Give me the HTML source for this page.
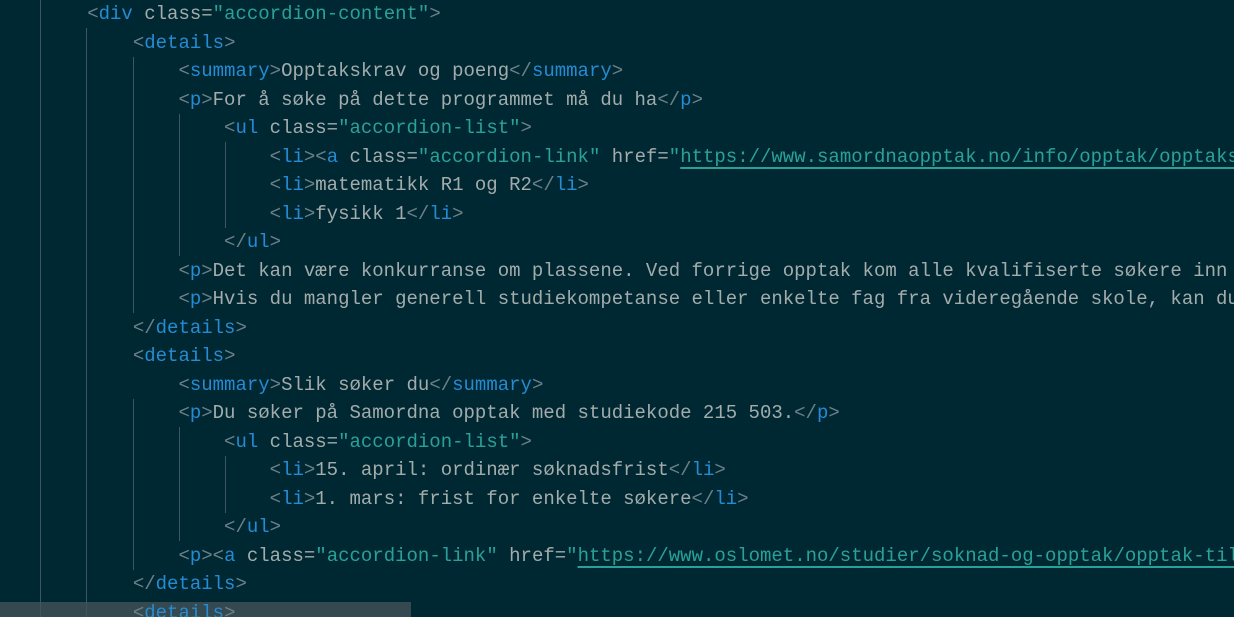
<!DOCTYPE html>
<html><head><meta charset="utf-8"><style>
html,body{margin:0;padding:0;width:1234px;height:617px;overflow:hidden;}
body{background:#002833;position:relative;}
.code{position:absolute;left:-4px;top:0;width:1240px;height:617px;overflow:hidden;font-family:"Liberation Mono",monospace;font-size:19px;color:#a3acab;}
.l{height:28.5px;line-height:28.5px;white-space:pre;}
.t{color:#268bd2}
.b{color:#6c8088}
.s{color:#2aa198}
.u{color:#2aa198;text-decoration:underline;text-decoration-color:#2aa198;text-underline-offset:5px;text-decoration-thickness:2px}
.g{position:absolute;width:1px;background:#3d5660;}
.hl{position:absolute;left:0;top:602px;width:411px;height:15px;background:#344a50;}
</style></head><body>
<div class="hl"></div>
<div class="g" style="left:40px;top:0;height:617px"></div>
<div class="g" style="left:86px;top:28px;height:589px"></div>
<div class="g" style="left:133px;top:57px;height:256px"></div>
<div class="g" style="left:179px;top:114px;height:142px"></div>
<div class="g" style="left:225px;top:142px;height:86px"></div>
<div class="g" style="left:133px;top:399px;height:171px"></div>
<div class="g" style="left:179px;top:427px;height:114px"></div>
<div class="g" style="left:225px;top:456px;height:57px"></div>
<div class="code">
<div class="l">        <span class="b">&lt;</span><span class="t">div</span> class=<span class="s">"accordion-content"</span><span class="b">&gt;</span></div>
<div class="l">            <span class="b">&lt;</span><span class="t">details</span><span class="b">&gt;</span></div>
<div class="l">                <span class="b">&lt;</span><span class="t">summary</span><span class="b">&gt;</span>Opptakskrav og poeng<span class="b">&lt;/</span><span class="t">summary</span><span class="b">&gt;</span></div>
<div class="l">                <span class="b">&lt;</span><span class="t">p</span><span class="b">&gt;</span>For å søke på dette programmet må du ha<span class="b">&lt;/</span><span class="t">p</span><span class="b">&gt;</span></div>
<div class="l">                    <span class="b">&lt;</span><span class="t">ul</span> class=<span class="s">"accordion-list"</span><span class="b">&gt;</span></div>
<div class="l">                        <span class="b">&lt;</span><span class="t">li</span><span class="b">&gt;&lt;</span><span class="t">a</span> class=<span class="s">"accordion-link"</span> href=<span class="s">"</span><span class="u">https://www.samordnaopptak.no/info/opptak/opptakskrav</span></div>
<div class="l">                        <span class="b">&lt;</span><span class="t">li</span><span class="b">&gt;</span>matematikk R1 og R2<span class="b">&lt;/</span><span class="t">li</span><span class="b">&gt;</span></div>
<div class="l">                        <span class="b">&lt;</span><span class="t">li</span><span class="b">&gt;</span>fysikk 1<span class="b">&lt;/</span><span class="t">li</span><span class="b">&gt;</span></div>
<div class="l">                    <span class="b">&lt;/</span><span class="t">ul</span><span class="b">&gt;</span></div>
<div class="l">                <span class="b">&lt;</span><span class="t">p</span><span class="b">&gt;</span>Det kan være konkurranse om plassene. Ved forrige opptak kom alle kvalifiserte søkere inn</div>
<div class="l">                <span class="b">&lt;</span><span class="t">p</span><span class="b">&gt;</span>Hvis du mangler generell studiekompetanse eller enkelte fag fra videregående skole, kan du</div>
<div class="l">            <span class="b">&lt;/</span><span class="t">details</span><span class="b">&gt;</span></div>
<div class="l">            <span class="b">&lt;</span><span class="t">details</span><span class="b">&gt;</span></div>
<div class="l">                <span class="b">&lt;</span><span class="t">summary</span><span class="b">&gt;</span>Slik søker du<span class="b">&lt;/</span><span class="t">summary</span><span class="b">&gt;</span></div>
<div class="l">                <span class="b">&lt;</span><span class="t">p</span><span class="b">&gt;</span>Du søker på Samordna opptak med studiekode 215 503.<span class="b">&lt;/</span><span class="t">p</span><span class="b">&gt;</span></div>
<div class="l">                    <span class="b">&lt;</span><span class="t">ul</span> class=<span class="s">"accordion-list"</span><span class="b">&gt;</span></div>
<div class="l">                        <span class="b">&lt;</span><span class="t">li</span><span class="b">&gt;</span>15. april: ordinær søknadsfrist<span class="b">&lt;/</span><span class="t">li</span><span class="b">&gt;</span></div>
<div class="l">                        <span class="b">&lt;</span><span class="t">li</span><span class="b">&gt;</span>1. mars: frist for enkelte søkere<span class="b">&lt;/</span><span class="t">li</span><span class="b">&gt;</span></div>
<div class="l">                    <span class="b">&lt;/</span><span class="t">ul</span><span class="b">&gt;</span></div>
<div class="l">                <span class="b">&lt;</span><span class="t">p</span><span class="b">&gt;&lt;</span><span class="t">a</span> class=<span class="s">"accordion-link"</span> href=<span class="s">"</span><span class="u">https://www.oslomet.no/studier/soknad-og-opptak/opptak-til</span></div>
<div class="l">            <span class="b">&lt;/</span><span class="t">details</span><span class="b">&gt;</span></div>
<div class="l">            <span class="b">&lt;</span><span class="t">details</span><span class="b">&gt;</span></div>
</div>
</body></html>
